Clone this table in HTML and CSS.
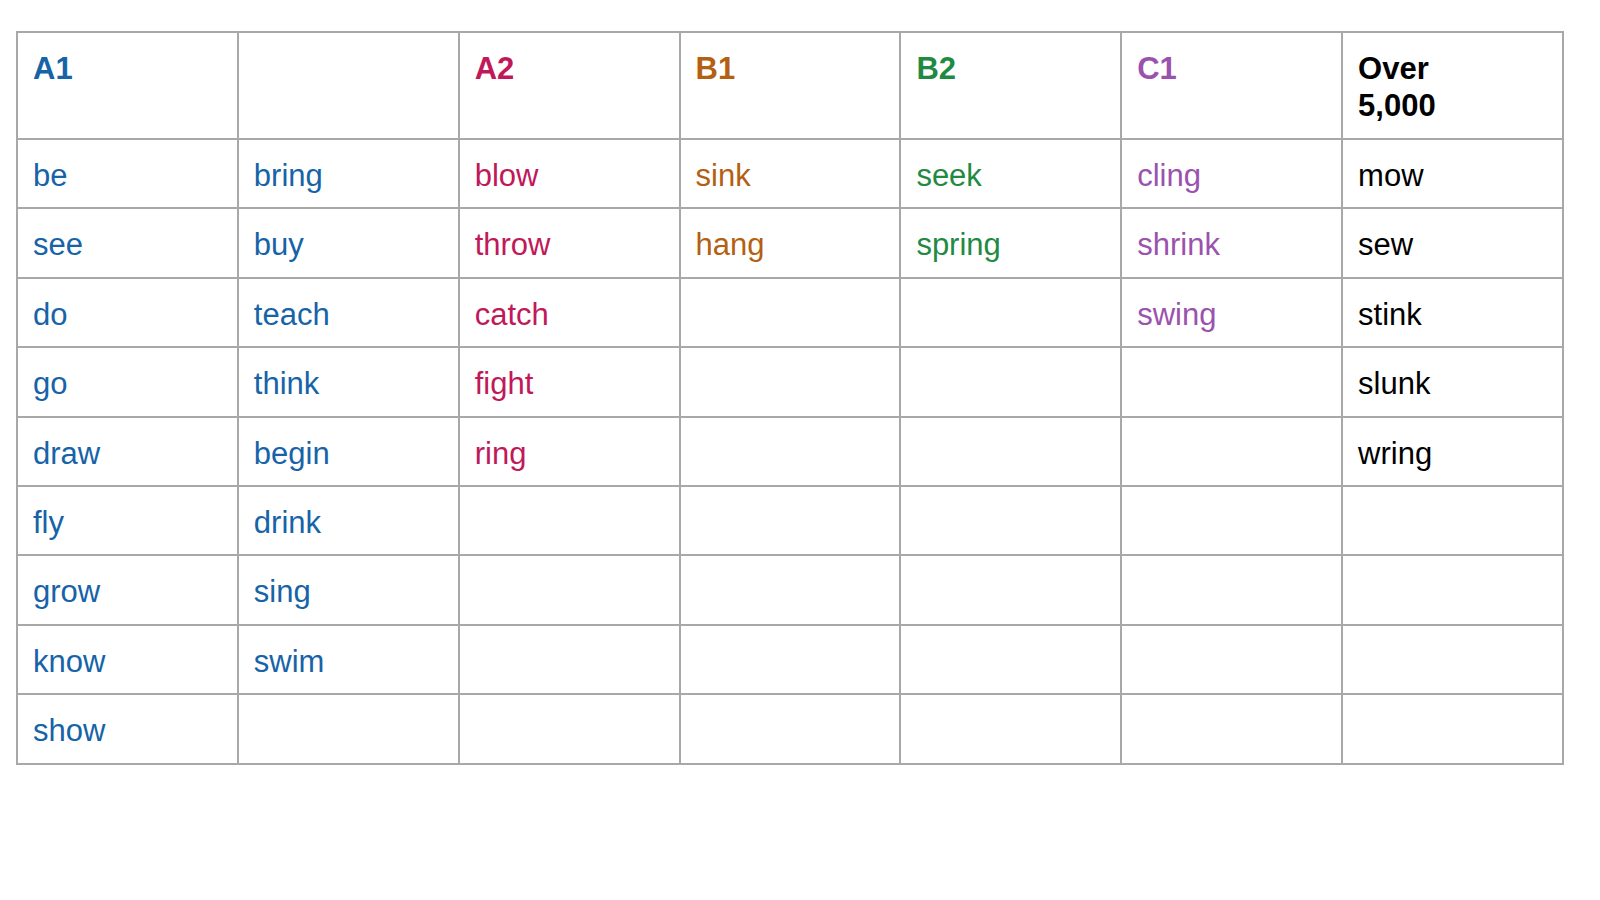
FILE: index.html
```html
<!DOCTYPE html>
<html lang="en">
<head>
<meta charset="utf-8">
<title>Verb levels</title>
<link rel="stylesheet" href="styles.css">
</head>
<body>
<table class="levels">
  <colgroup>
    <col><col><col><col><col><col><col>
  </colgroup>
  <thead>
    <tr class="head-row">
      <th class="a1">A1</th>
      <th class="a1"></th>
      <th class="a2">A2</th>
      <th class="b1">B1</th>
      <th class="b2">B2</th>
      <th class="c1">C1</th>
      <th class="over">Over<br>5,000</th>
    </tr>
  </thead>
  <tbody>
    <tr><td class="a1">be</td><td class="a1">bring</td><td class="a2">blow</td><td class="b1">sink</td><td class="b2">seek</td><td class="c1">cling</td><td class="over">mow</td></tr>
    <tr><td class="a1">see</td><td class="a1">buy</td><td class="a2">throw</td><td class="b1">hang</td><td class="b2">spring</td><td class="c1">shrink</td><td class="over">sew</td></tr>
    <tr><td class="a1">do</td><td class="a1">teach</td><td class="a2">catch</td><td class="b1"></td><td class="b2"></td><td class="c1">swing</td><td class="over">stink</td></tr>
    <tr><td class="a1">go</td><td class="a1">think</td><td class="a2">fight</td><td class="b1"></td><td class="b2"></td><td class="c1"></td><td class="over">slunk</td></tr>
    <tr><td class="a1">draw</td><td class="a1">begin</td><td class="a2">ring</td><td class="b1"></td><td class="b2"></td><td class="c1"></td><td class="over">wring</td></tr>
    <tr><td class="a1">fly</td><td class="a1">drink</td><td class="a2"></td><td class="b1"></td><td class="b2"></td><td class="c1"></td><td class="over"></td></tr>
    <tr><td class="a1">grow</td><td class="a1">sing</td><td class="a2"></td><td class="b1"></td><td class="b2"></td><td class="c1"></td><td class="over"></td></tr>
    <tr><td class="a1">know</td><td class="a1">swim</td><td class="a2"></td><td class="b1"></td><td class="b2"></td><td class="c1"></td><td class="over"></td></tr>
    <tr><td class="a1">show</td><td class="a1"></td><td class="a2"></td><td class="b1"></td><td class="b2"></td><td class="c1"></td><td class="over"></td></tr>
  </tbody>
</table>
</body>
</html>
```

FILE: styles.css
```css
html, body {
  margin: 0;
  padding: 0;
  background: #ffffff;
}

body {
  font-family: "Liberation Sans", Arial, sans-serif;
  padding: 31px 0 0 16px;
}

.levels {
  width: 1548px;
  table-layout: fixed;
  border-collapse: separate;
  border-spacing: 0;
  border-top: 2px solid #a8a8a8;
  border-left: 2px solid #a8a8a8;
  font-size: 31px;
  line-height: 36.7px;
}

.levels th,
.levels td {
  box-sizing: border-box;
  border-right: 2px solid #a8a8a8;
  border-bottom: 2px solid #a8a8a8;
  padding: 0 10px 0 15px;
  text-align: left;
  vertical-align: top;
  overflow: hidden;
}

.levels th {
  height: 107px;
  padding-top: 18px;
  font-weight: bold;
}

.levels td {
  height: 69.4px;
  padding-top: 18px;
  font-weight: normal;
}

.a1 { color: #1763a8; }
.a2 { color: #c0195a; }
.b1 { color: #b45f12; }
.b2 { color: #1f8a42; }
.c1 { color: #9a52ae; }
.over { color: #000000; }
```
